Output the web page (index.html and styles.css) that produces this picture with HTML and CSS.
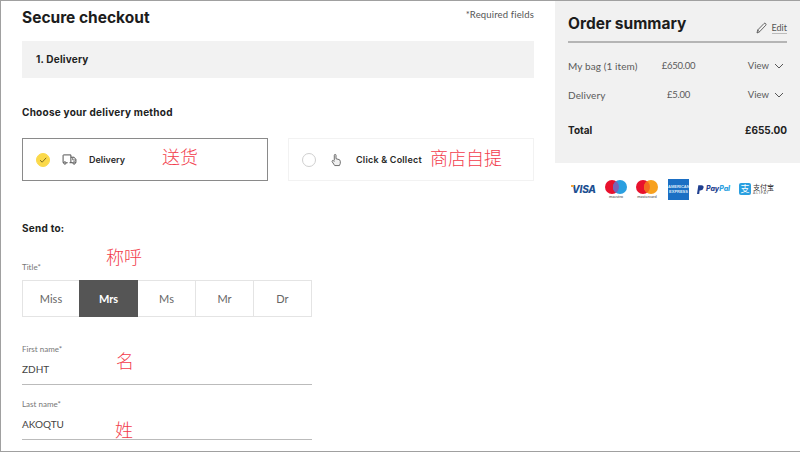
FILE: index.html
```
<!DOCTYPE html>
<html lang="en">
<head>
<meta charset="utf-8">
<title>Secure checkout</title>
<link rel="stylesheet" href="styles.css">
</head>
<body>
<div class="page">
  <main class="main">
    <header class="head">
      <h1 class="title">Secure checkout</h1>
      <span class="required">*Required fields</span>
    </header>
    <div class="step">1. Delivery</div>
    <h2 class="subhead method-head">Choose your delivery method</h2>
    <div class="options">
      <div class="option option-on">
        <span class="radio radio-on">
          <svg width="10" height="10" viewBox="0 0 10 10"><path d="M2 5.2 4.2 7.2 8.2 2.8" fill="none" stroke="#7d6c20" stroke-width="1"/></svg>
        </span>
        <svg class="opt-icon" width="15" height="11" viewBox="0 0 16 12"><path d="M6 9.5H4.500M1.500 9.500H1V1.500Q1 1 1.500 1H9.500V9.500H8M9.500 3.500H13L15 6V9.500H14.500M11.500 9.500H9.500" fill="none" stroke="#444" stroke-width="1"/><circle cx="3" cy="9.8" r="1.3" fill="none" stroke="#444"/><circle cx="13" cy="9.8" r="1.3" fill="none" stroke="#444"/><path d="M11.500 4V6.500H15" fill="none" stroke="#444" stroke-width=".8"/></svg>
        <span class="opt-label">Delivery</span>
      </div>
      <div class="option option-off">
        <span class="radio"></span>
        <svg class="opt-icon" width="12" height="14" viewBox="0 0 14 15"><path d="M5 8V2Q5 1 6 1T7 2V6L10.500 7Q12 7.500 12 9V11.500L11 14H5.500L2.500 9.500Q2 8.500 3 8T5 9.500" fill="#f0f0f0" stroke="#666" stroke-width="1.100"/></svg>
        <span class="opt-label">Click &amp; Collect</span>
      </div>
    </div>
    <h2 class="subhead send-head">Send to:</h2>
    <label class="label title-label">Title*</label>
    <div class="segments">
      <span class="seg">Miss</span>
      <span class="seg seg-on">Mrs</span>
      <span class="seg">Ms</span>
      <span class="seg">Mr</span>
      <span class="seg">Dr</span>
    </div>
    <div class="field first-field">
      <label class="label">First name*</label>
      <div class="value">ZDHT</div>
    </div>
    <div class="field">
      <label class="label">Last name*</label>
      <div class="value">AKOQTU</div>
    </div>
  </main>
  <aside class="side">
    <section class="summary">
      <div class="sum-head">
        <h2 class="sum-title">Order summary</h2>
        <span class="edit-wrap">
          <svg width="11" height="12" viewBox="0 0 11 12"><path d="M1 11 1.700 8 8 1.500Q8.800.8 9.600 1.500T9.800 3.200L3.500 9.800ZM1.700 8 3.500 9.800" fill="none" stroke="#444" stroke-width=".8"/></svg>
          <span class="edit">Edit</span>
        </span>
      </div>
      <div class="row row-first">
        <span class="row-name">My bag (1 item)</span><span class="row-price">£650.00</span>
        <span class="row-view">View <svg width="10" height="6" viewBox="0 0 10 6"><path d="M1 1 5 5 9 1" fill="none" stroke="#444" stroke-width=".9"/></svg></span>
      </div>
      <div class="row">
        <span class="row-name">Delivery</span><span class="row-price">£5.00</span>
        <span class="row-view">View <svg width="10" height="6" viewBox="0 0 10 6"><path d="M1 1 5 5 9 1" fill="none" stroke="#444" stroke-width=".9"/></svg></span>
      </div>
      <div class="total"><span>Total</span><span>£655.00</span></div>
    </section>
    <div class="pay">
      <span class="visa">VISA</span>
      <span class="card">
        <svg width="22" height="14" viewBox="0 0 22 14"><circle cx="7" cy="7" r="7" fill="#e8112d"/><circle cx="15" cy="7" r="7" fill="#2a9fe0"/><path d="M11 1.300a7 7 0 0 1 0 11.400a7 7 0 0 1 0-11.400" fill="#7b62b5"/></svg>
        <span class="card-name">maestro</span>
      </span>
      <span class="card">
        <svg width="22" height="14" viewBox="0 0 22 14"><circle cx="7" cy="7" r="7" fill="#e8112d"/><circle cx="15" cy="7" r="7" fill="#f7a11f"/><path d="M11 1.300a7 7 0 0 1 0 11.400a7 7 0 0 1 0-11.400" fill="#f46a1f"/></svg>
        <span class="card-name">mastercard</span>
      </span>
      <span class="amex">AMERICAN EXPRESS</span>
      <span class="paypal">
        <svg width="7" height="9" viewBox="0 0 8 10"><path d="M1.500 0H5Q8 0 7.500 3T4 6H3L2.500 10H0Z" fill="#1f3f8f"/></svg>
        <span class="pp-a">Pay</span><span class="pp-b">Pal</span>
      </span>
      <span class="alipay">
        <span class="ali-mark">支</span>
        <span class="ali-text"><span class="ali-cn">支付宝</span><span class="ali-en">ALIPAY</span></span>
      </span>
    </div>
  </aside>
  <span class="note note-delivery">送货</span>
  <span class="note note-collect">商店自提</span>
  <span class="note note-title">称呼</span>
  <span class="note note-first">名</span>
  <span class="note note-last">姓</span>
</div>
</body>
</html>
```
FILE: styles.css
```
* { box-sizing: border-box; }
html, body { margin: 0; padding: 0; background: #fff; }
.page {
  position: relative;
  display: flex;
  width: 800px;
  height: 452px;
  overflow: hidden;
  border: 1px solid #a0a0a0;
  border-right: 0;
  font-family: Lato, "Liberation Sans", sans-serif;
  color: #222;
}
.main { width: 554px; padding: 0 21px; flex: none; }
.head { display: flex; justify-content: space-between; height: 40px; }
.title { margin: 7px 0 0; font: 700 15.500px/20px Inter, sans-serif; color: #1c1c1c; }
.required { margin-top: 8px; font-size: 9.500px; line-height: 12px; color: #555; letter-spacing: .15px; }
.step { height: 37px; padding-left: 14px; background: #f2f2f2; font: 700 10px/37px Inter, sans-serif; letter-spacing: .2px; color: #222; }
.subhead { margin: 0; font: 700 10px/14px Inter, sans-serif; letter-spacing: .25px; color: #222; }
.method-head { margin-top: 27px; }
.options { display: flex; gap: 20px; margin-top: 19px; }
.option { display: flex; align-items: center; width: 246px; height: 43px; padding-left: 13px; }
.option-on { border: 1px solid #8a8a8a; }
.option-off { border: 1px solid #f2f2f2; }
.radio { display: flex; align-items: center; justify-content: center; flex: none; width: 14px; height: 14px; border: 1px solid #cfcfcf; border-radius: 50%; }
.radio-on { background: #fbd94a; border-color: #fbd94a; }
.opt-icon { flex: none; margin-left: 12px; }
.option-on .opt-label { margin-left: 12px; }
.option-off .opt-icon { margin-left: 14px; }
.option-off .opt-label { margin-left: 14px; letter-spacing: .2px; }
.opt-label { font: 600 9px/12px Inter, sans-serif; color: #2a2a2a; }
.send-head { margin-top: 40px; }
.label { display: block; font-size: 8px; line-height: 10px; color: #777; }
.title-label { margin-top: 27px; }
.segments { display: flex; width: 290px; height: 37px; margin-top: 8px; border: 1px solid #e4e4e4; }
.seg { flex: 1 1 0; text-align: center; font-size: 11px; line-height: 35px; color: #666; border-left: 1px solid #e4e4e4; }
.seg:first-child { flex: 0 0 56px; border-left: 0; }
.seg-on { flex: 0 0 59px; margin: -1px 0; line-height: 37px; background: #555; color: #fff; font-weight: 700; border-left: 0; }
.seg-on + .seg { border-left: 0; }
.field { width: 290px; height: 55px; border-bottom: 1px solid #bbb; padding-top: 14px; }
.first-field { margin-top: 13px; }
.value { margin-top: 8px; font-size: 10px; line-height: 14px; color: #444; }
.side { width: 245px; flex: none; }
.summary { height: 162px; padding: 0 13px; background: #f1f1f1; }
.sum-head { display: flex; justify-content: space-between; align-items: flex-end; height: 42px; border-bottom: 2px solid #b5b5b5; padding-bottom: 7px; }
.sum-title { margin: 0; font: 700 15.500px/20px Inter, sans-serif; color: #1c1c1c; }
.edit-wrap { display: flex; align-items: center; gap: 5px; }
.edit { font-size: 9px; line-height: 11px; color: #555; border-bottom: 1px solid #bbb; }
.row { display: flex; align-items: center; height: 29px; font-size: 10px; color: #5a5a5a; }
.row-first { margin-top: 8px; }
.row-name { width: 86px; letter-spacing: .1px; }
.row-price { width: 49px; text-align: center; font-size: 9.500px; letter-spacing: -.25px; }
.row-view { margin-left: auto; margin-right: 3px; display: flex; align-items: center; gap: 5px; font-size: 9.500px; }
.total { display: flex; justify-content: space-between; margin-top: 14px; font: 700 10px/14px Inter, sans-serif; color: #222; }
.pay { display: flex; align-items: center; height: 38px; margin-top: 7px; padding-left: 17px; }
.visa { position: relative; width: 33px; font: italic 800 10px/12px Inter, sans-serif; letter-spacing: -.2px; color: #1d4f91; }
.visa::before { content: ""; position: absolute; left: -1px; top: 2px; width: 3px; height: 2px; background: #f2a53a; }
.card { display: flex; flex-direction: column; align-items: center; width: 22px; margin-right: 9px; }
.card-name { font-size: 4px; line-height: 5px; color: #444; white-space: nowrap; }
.amex { width: 21px; height: 21px; margin-left: 1px; padding-top: 5px; background: #1b6fc4; color: #dbe9f8; font: 700 4px/5px "Liberation Sans", sans-serif; text-align: center; overflow: hidden; }
.paypal { display: flex; align-items: center; gap: 2px; margin-left: 8px; font: italic 800 7px/10px Inter, sans-serif; }
.pp-a { color: #1f3f8f; margin-right: -2px; }
.pp-b { color: #2a9fe0; }
.alipay { display: flex; align-items: center; gap: 2px; margin-left: 9px; }
.ali-mark { width: 12px; height: 12px; background: #2a9fe0; border-radius: 2px; color: #fff; font: 9px/12px "Noto Sans CJK SC", sans-serif; text-align: center; }
.ali-text { display: flex; flex-direction: column; }
.ali-cn { font: 7px/8px "Noto Sans CJK SC", sans-serif; color: #333; }
.ali-en { font-size: 3.500px; line-height: 4px; letter-spacing: .8px; color: #555; }
.note { position: absolute; font: 300 18px/20px "Noto Sans CJK SC", sans-serif; color: #f23c4c; white-space: nowrap; }
.note-delivery { left: 161px; top: 145px; }
.note-collect { left: 429px; top: 146px; }
.note-title { left: 105px; top: 245px; }
.note-first { left: 115px; top: 349px; }
.note-last { left: 114px; top: 418px; }
```
